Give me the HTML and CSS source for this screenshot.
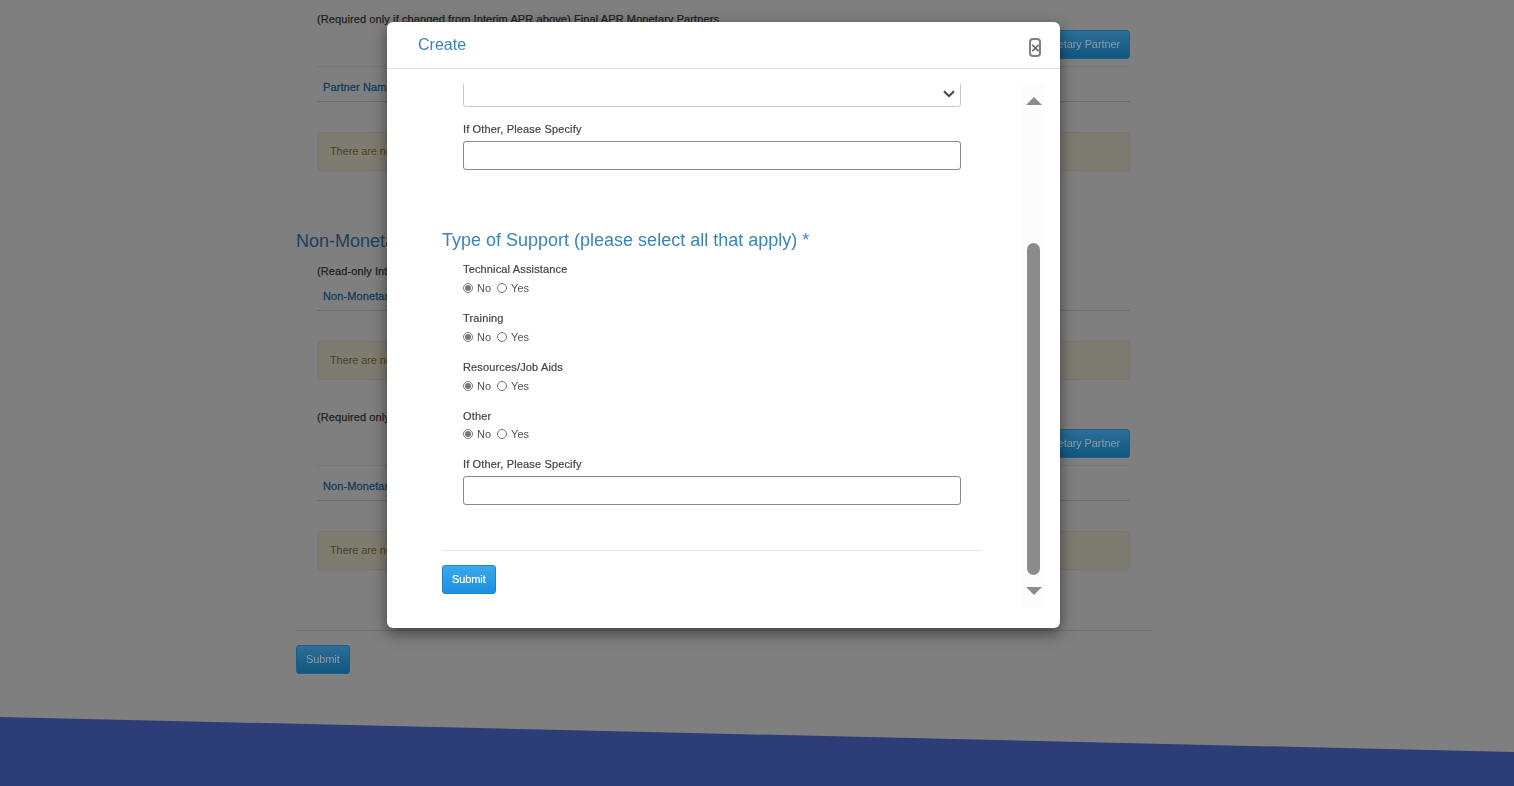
FILE: index.html
```html
<!DOCTYPE html>
<html lang="en">
<head>
<meta charset="utf-8">
<title>Create</title>
<link rel="stylesheet" href="styles.css">
</head>
<body>
<div class="page">
  <main class="container">
    <section class="inner first">
      <p class="note">(Required only if changed from Interim APR above) Final APR Monetary Partners</p>
      <div class="actions"><button class="btn btn-page" type="button">Add Final APR Monetary Partner</button></div>
      <div class="table-head ruled"><a class="col">Partner Name</a></div>
      <div class="alert">There are no records to display</div>
    </section>
    <h2 class="section-title">Non-Monetary Partners</h2>
    <section class="inner">
      <p class="note">(Read-only Interim APR) Non-Monetary Partners</p>
      <div class="table-head compact"><a class="col">Non-Monetary Partner Name</a></div>
      <div class="alert">There are no records to display</div>
      <p class="note note-gap">(Required only if changed from Interim APR above) Final APR Non-Monetary Partners</p>
      <div class="actions"><button class="btn btn-page" type="button">Add Final APR Non-Monetary Partner</button></div>
      <div class="table-head ruled"><a class="col">Non-Monetary Partner Name</a></div>
      <div class="alert">There are no records to display</div>
    </section>
    <div class="page-submit"><button class="btn btn-page" type="button">Submit</button></div>
  </main>
  <footer class="footer"></footer>
</div>

<div class="backdrop"></div>

<div class="modal">
  <header class="modal-header">
    <h4 class="modal-title">Create</h4>
    <button class="close" type="button" aria-label="Close">×</button>
  </header>
  <div class="modal-body">
    <div class="scroll-content">
      <div class="select-wrap">
        <div class="select-box"></div>
        <svg class="chevron" width="12" height="8" viewBox="0 0 12 8"><path d="M1 1.2 L6 6.2 L11 1.2" fill="none" stroke="#444" stroke-width="2"/></svg>
      </div>
      <label class="field-label gap-specify">If Other, Please Specify</label>
      <input class="text-input" type="text">

      <h3 class="support-title">Type of Support (please select all that apply) *</h3>

      <div class="radio-group">
        <div class="field-label">Technical Assistance</div>
        <div class="radio-row">
          <label class="radio"><input type="radio" name="r1" checked>No</label>
          <label class="radio"><input type="radio" name="r1">Yes</label>
        </div>
      </div>
      <div class="radio-group">
        <div class="field-label">Training</div>
        <div class="radio-row">
          <label class="radio"><input type="radio" name="r2" checked>No</label>
          <label class="radio"><input type="radio" name="r2">Yes</label>
        </div>
      </div>
      <div class="radio-group">
        <div class="field-label">Resources/Job Aids</div>
        <div class="radio-row">
          <label class="radio"><input type="radio" name="r3" checked>No</label>
          <label class="radio"><input type="radio" name="r3">Yes</label>
        </div>
      </div>
      <div class="radio-group">
        <div class="field-label">Other</div>
        <div class="radio-row tight">
          <label class="radio"><input type="radio" name="r4" checked>No</label>
          <label class="radio"><input type="radio" name="r4">Yes</label>
        </div>
      </div>

      <label class="field-label">If Other, Please Specify</label>
      <input class="text-input" type="text">

      <hr class="divider">
      <button class="btn modal-submit" type="button">Submit</button>
    </div>
    <div class="scrollbar" aria-hidden="true">
      <span class="arrow up"></span>
      <span class="thumb"></span>
      <span class="arrow down"></span>
    </div>
  </div>
</div>
</body>
</html>
```
FILE: styles.css
```css
* { box-sizing: border-box; }

html, body {
  margin: 0;
  height: 786px;
  overflow: hidden;
  background: #fff;
  font-family: "Liberation Sans", Arial, sans-serif;
  font-size: 11px;
  color: #333;
}

.page { height: 786px; position: relative; }

.container { width: 856px; margin-left: 296px; }

.inner { padding: 0 22px 0 21px; }
.inner.first { padding-top: 11px; }

.note {
  margin: 0;
  font-size: 11px;
  line-height: 16px;
  font-weight: 400;
  letter-spacing: .1px;
  -webkit-text-stroke: .25px currentColor;
  color: #444;
}
.note-gap { margin-top: 29px; }

.actions { display: flex; justify-content: flex-end; margin-top: 3px; height: 29px; }
.note-gap + .actions { margin-top: 4px; }

.btn {
  height: 29px;
  padding: 0 9px;
  border: 1px solid #1b86c9;
  border-radius: 3px;
  background: linear-gradient(#3aa9ec, #1c8fdf);
  color: #fff;
  font: 400 11px/1 "Liberation Sans", Arial, sans-serif;
  letter-spacing: -.1px;
  -webkit-text-stroke: .2px currentColor;
  white-space: nowrap;
}

.btn-page {
  position: relative;
  z-index: 2;
  border-color: #1a5f8a;
  background: linear-gradient(#2c6f98, #11567f);
  color: #8d9aa3;
  -webkit-text-stroke: 0;
}

.table-head { display: flex; align-items: center; padding-left: 6px; border-bottom: 1px solid #ddd; }
.table-head.ruled { height: 36px; margin-top: 7px; padding-top: 5px; border-top: 1px solid #eee; }
.table-head.compact { height: 32px; padding-top: 2px; }

.col {
  color: #337ab7;
  font-size: 11px;
  letter-spacing: .1px;
  -webkit-text-stroke: .3px currentColor;
}

.alert {
  height: 39px;
  margin-top: 30px;
  padding: 0 12px 2px;
  display: flex;
  align-items: center;
  background: #fcf8e3;
  border: 1px solid #faebcc;
  border-radius: 4px;
  color: #a5803f;
  font-size: 11px;
  letter-spacing: -.1px;
}

.section-title {
  margin: 60px 0 12px;
  font-size: 18px;
  line-height: 20px;
  font-weight: 400;
  color: #3a84b8;
}

.page-submit { margin-top: 60px; padding-top: 14px; border-top: 1px solid #ddd; }

.footer {
  position: absolute;
  left: 0;
  right: 0;
  bottom: 0;
  height: 69px;
  background: #5a7af0;
  clip-path: polygon(0 0, 100% 35px, 100% 100%, 0 100%);
}

.backdrop {
  position: fixed;
  inset: 0;
  z-index: 1;
  background: rgba(0, 0, 0, .5);
}

.modal {
  position: fixed;
  left: 387px;
  top: 22px;
  z-index: 3;
  width: 673px;
  height: 606px;
  display: flex;
  flex-direction: column;
  background: #fff;
  border-radius: 6px;
  box-shadow: 0 5px 15px rgba(0, 0, 0, .5);
}

.modal-header {
  height: 47px;
  flex: none;
  display: flex;
  align-items: flex-start;
  justify-content: space-between;
  padding: 0 19px 0 31px;
  border-bottom: 1px solid #e5e5e5;
}

.modal-title {
  margin: 14px 0 0;
  font-size: 16px;
  line-height: 18px;
  font-weight: 400;
  color: #3a84b8;
}

.close {
  width: 12px;
  height: 19px;
  margin-top: 16px;
  padding: 0;
  border: 2px solid #808080;
  border-radius: 4px;
  background: #fff;
  color: #666;
  font: 700 15px/13px "Liberation Sans", Arial, sans-serif;
}

.modal-body {
  flex: none;
  height: 524px;
  margin-top: 15px;
  display: flex;
  padding-left: 55px;
}

.scroll-content {
  width: 540px;
  height: 524px;
  flex: none;
  overflow: hidden;
}

.select-wrap {
  position: relative;
  overflow: hidden;
  margin-left: 21px;
  width: 498px;
  height: 23px;
}

.select-box {
  position: absolute;
  left: 0;
  right: 0;
  bottom: 0;
  height: 29px;
  border: 1px solid #c8c8c8;
  border-radius: 3px;
  background: #fff;
}

.chevron { position: absolute; right: 6px; top: 6px; }

.field-label {
  display: block;
  margin-left: 21px;
  font-size: 11px;
  line-height: 14px;
  letter-spacing: .15px;
  -webkit-text-stroke: .2px currentColor;
  color: #444;
}
.gap-specify { margin-top: 15px; }

.text-input {
  display: block;
  width: 498px;
  height: 29px;
  margin: 5px 0 0 21px;
  padding: 0 8px;
  border: 1px solid #8a8a8a;
  border-radius: 3px;
  background: #fff;
}

.support-title {
  margin: 60px 0 12px;
  font-size: 18px;
  line-height: 20px;
  font-weight: 400;
  color: #3a84b8;
}

.radio-group { margin-bottom: 16px; }

.radio-row {
  display: flex;
  gap: 6px;
  margin: 5px 0 0 21px;
  height: 14px;
  align-items: center;
}
.radio-row.tight { margin-top: 4px; }

.radio {
  display: flex;
  align-items: center;
  gap: 4px;
  font-size: 11px;
  line-height: 14px;
  color: #555;
}
.radio input {
  width: 10px;
  height: 10px;
  margin: 0 0 1px;
  accent-color: #777;
}

.divider {
  margin: 45px 0 14px;
  border: 0;
  border-top: 1px solid #e5e5e5;
}

.modal-submit { display: block; }

.scrollbar {
  position: relative;
  width: 23px;
  height: 524px;
  flex: none;
  margin-left: 40px;
  background: #fcfcfc;
}

.thumb {
  position: absolute;
  left: 5px;
  top: 159px;
  width: 13px;
  height: 332px;
  border-radius: 7px;
  background: #8c8c8c;
}

.arrow {
  position: absolute;
  left: 4px;
  width: 0;
  height: 0;
  border-left: 8px solid transparent;
  border-right: 8px solid transparent;
}
.arrow.up { top: 13px; border-bottom: 8px solid #8c8c8c; }
.arrow.down { top: 503px; border-top: 8px solid #8c8c8c; }
```
